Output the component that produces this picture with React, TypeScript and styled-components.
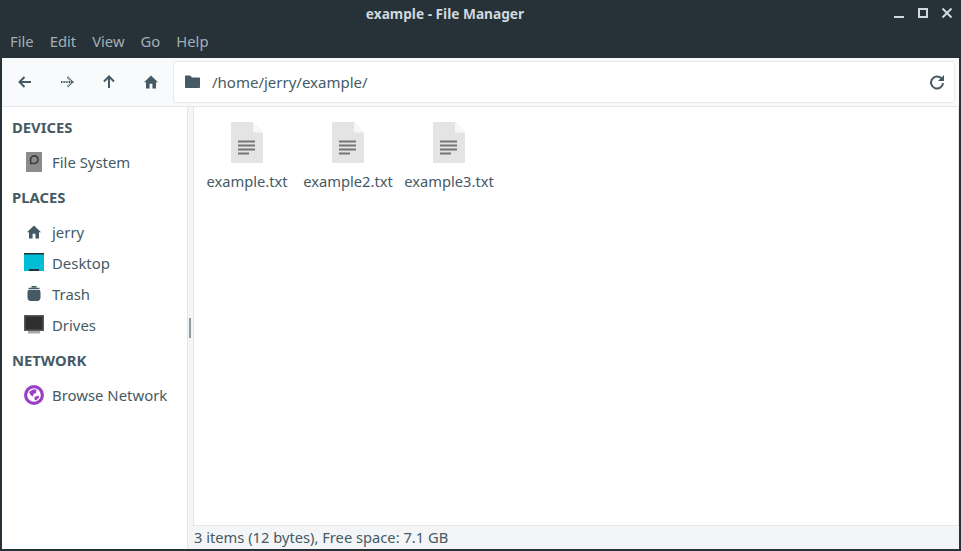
import React from "react";
import styled, { createGlobalStyle } from "styled-components";

const GlobalStyle = createGlobalStyle`
  html, body {
    margin: 0;
    padding: 0;
    background: #263238;
    overflow: hidden;
  }
`;

const Window = styled.div`
  width: 961px;
  height: 551px;
  display: flex;
  flex-direction: column;
  background: #263238;
  font-family: "Noto Sans", sans-serif;
  font-size: 15px;
  color: #455a64;
  overflow: hidden;
`;

const TitleBar = styled.div`
  height: 27px;
  flex: none;
  position: relative;
  display: flex;
  align-items: center;
  justify-content: center;
  padding-right: 71px;
  color: #cfd8dc;
  font-size: 13.7px;
  font-weight: 700;
`;

const WindowButtons = styled.div`
  position: absolute;
  top: 7px;
  right: 8px;
  display: flex;
  gap: 12px;
`;

const MenuBar = styled.div`
  height: 31px;
  flex: none;
  display: flex;
  align-items: center;
  gap: 16px;
  padding: 0 0 4px 10px;
  box-sizing: border-box;
  color: #a3afb5;
  font-size: 14.8px;
`;

const Toolbar = styled.div`
  height: 49px;
  flex: none;
  margin: 0 2px;
  display: flex;
  align-items: center;
  box-sizing: border-box;
  padding: 0 4px 0 0;
  background: #f9fafb;
  border-bottom: 1px solid #e3e7e9;
`;

const NavButtons = styled.div`
  width: 171px;
  flex: none;
  display: flex;
  align-items: center;
  padding-left: 2px;
  box-sizing: border-box;
`;

const NavButton = styled.div`
  width: 42px;
  height: 42px;
  display: flex;
  align-items: center;
  justify-content: center;
`;

const AddressBar = styled.div`
  flex: 1;
  height: 42px;
  display: flex;
  align-items: center;
  box-sizing: border-box;
  padding: 0 9px 0 11px;
  background: #fff;
  border: 1px solid #e6e9eb;
  border-radius: 3px;
  font-size: 15px;
`;

const AddressText = styled.span`
  flex: 1;
  margin-left: 12px;
`;

const Body = styled.div`
  flex: 1;
  min-height: 0;
  margin: 0 2px 2px;
  display: flex;
  background: #f4f5f7;
`;

const Sidebar = styled.div`
  width: 185px;
  flex: none;
  background: #fff;
  border-right: 1px solid #e3e7e9;
  padding-top: 8px;
  position: relative;
`;

const Grip = styled.div`
  position: absolute;
  top: 211px;
  right: -4px;
  width: 2px;
  height: 20px;
  background: #8f9ba1;
`;

const SectionTitle = styled.div<{ $gap: number }>`
  height: 25px;
  line-height: 25px;
  padding-left: 10px;
  margin-top: ${(p) => p.$gap}px;
  margin-bottom: 6px;
  font-weight: 700;
  font-size: 14.8px;
`;

const SideItem = styled.div`
  height: 31px;
  display: flex;
  align-items: center;
  padding-left: 21px;
  gap: 8px;
  font-size: 14.9px;
`;

const SideIcon = styled.div`
  width: 21px;
  height: 21px;
  display: flex;
  align-items: center;
  justify-content: center;
`;

const Main = styled.div`
  flex: 1;
  min-width: 0;
  margin-left: 5px;
  display: flex;
  flex-direction: column;
`;

const Files = styled.div`
  flex: 1;
  display: flex;
  align-items: flex-start;
  background: #fff;
  border: 1px solid #e3e7e9;
  border-top: none;
  padding: 15px 0 0 5px;
  gap: 5px;
`;

const FileItem = styled.div`
  width: 96px;
  display: flex;
  flex-direction: column;
  align-items: center;
  gap: 8px;
  white-space: nowrap;
  line-height: 21px;
  font-size: 14.7px;
`;

const StatusBar = styled.div`
  height: 23px;
  flex: none;
  line-height: 23px;
  font-size: 14.7px;
  padding-left: 1px;
`;

const BackIcon = () => (
  <svg width="14" height="14" viewBox="0 0 14 14">
    <path d="M1.500 7H13M6.500 2 1.500 7l5 5" fill="none" stroke="#455a64" strokeWidth="2" />
  </svg>
);

const ForwardIcon = () => (
  <svg width="14" height="14" viewBox="0 0 14 14">
    <path d="M1 7H12.500M7.500 2l5 5-5 5" fill="none" stroke="#455a64" strokeWidth="2" strokeDasharray="1 .6" />
  </svg>
);

const UpIcon = () => (
  <svg width="14" height="14" viewBox="0 0 14 14">
    <path d="M7 13V1.500M2 6.500l5-5 5 5" fill="none" stroke="#455a64" strokeWidth="2" />
  </svg>
);

const HomeIcon = () => (
  <svg width="14" height="14" viewBox="0 0 14 14">
    <path d="M7 .5 0 7.200h2V13.500h3.600V8.800h2.800v4.700H12V7.200h2L7 .5Z" fill="#455a64" />
  </svg>
);

const FolderIcon = () => (
  <svg width="15" height="14" viewBox="0 0 15 14">
    <path d="M0 1.500C0 .9.400.5 1 .5h4.200L7 2.400h7c.6 0 1 .4 1 1V12c0 .6-.4 1-1 1H1c-.6 0-1-.4-1-1V1.500Z" fill="#455a64" />
  </svg>
);

const ReloadIcon = () => (
  <svg width="16" height="16" viewBox="0 0 16 16">
    <path d="M13 5.200A6 6 0 1 0 14 9" fill="none" stroke="#455a64" strokeWidth="2" />
    <path d="M15 1v6H9l6-6Z" fill="#455a64" />
  </svg>
);

const DiskIcon = () => (
  <svg width="16" height="20" viewBox="0 0 16 20">
    <rect width="16" height="20" fill="#8c8c8c" />
    <path d="M4.800 11.500 4.500 8a3.800 3.800 0 1 1 3.700 3.500H4.800Z" fill="none" stroke="#3c3c3c" strokeWidth="1.600" />
  </svg>
);

const DesktopIcon = () => (
  <svg width="20" height="19" viewBox="0 0 20 19">
    <rect width="20" height="18" fill="#00bcd4" />
    <rect width="20" height="1.500" fill="#263238" />
    <rect x="5" y="16" width="10" height="2" fill="#263238" />
  </svg>
);

const TrashIcon = () => (
  <svg width="14" height="15" viewBox="0 0 14 15">
    <path d="M1 4h12l.5 2.500v5c0 1.800-1.200 3.500-3.200 3.500H3.700C1.700 15 .5 13.300.5 11.500v-5L1 4Z" fill="#455a64" />
    <path d="M1.500 2.500h11M4.500.7h5" stroke="#455a64" strokeWidth="1.400" />
  </svg>
);

const DrivesIcon = () => (
  <svg width="20" height="19" viewBox="0 0 20 19">
    <rect width="20" height="16" fill="#5a5a5a" />
    <rect x="1.500" y="1.500" width="17" height="13" fill="#2f2f2f" />
    <rect x="4" y="16" width="12" height="2.500" fill="#a8a8a8" />
  </svg>
);

const NetworkIcon = () => (
  <svg width="20" height="20" viewBox="0 0 20 20">
    <circle cx="10" cy="10" r="8.400" fill="#fff" stroke="#9c3fc8" strokeWidth="3.200" />
    <path d="M5 7 9 4.500h3.500L12 8l-2.500 1-.5 2.500-2-1L5 7ZM10.500 12l4-1.500.5 2-3 3-1.500-1V12Z" fill="#9c3fc8" />
  </svg>
);

const TextFileIcon = () => (
  <svg width="32" height="41" viewBox="0 0 32 41">
    <path d="M1 0h21l10 10.500V40a1 1 0 0 1-1 1H1a1 1 0 0 1-1-1V1a1 1 0 0 1 1-1Z" fill="#e4e4e4" />
    <path d="M22 0l10 10.500H23a1 1 0 0 1-1-1V0Z" fill="#f7f7f7" />
    <path d="M7 19.500h17M7 23.500h17M7 27.500h17M7 31.500h11" stroke="#757575" strokeWidth="1.800" />
  </svg>
);

const files = ["example.txt", "example2.txt", "example3.txt"];

export default function App() {
  return (
    <Window>
      <GlobalStyle />
      <TitleBar>
        example - File Manager
        <WindowButtons>
          <svg width="12" height="12" viewBox="0 0 12 12">
            <path d="M1 10h10" stroke="#cfd8dc" strokeWidth="2" />
          </svg>
          <svg width="12" height="12" viewBox="0 0 12 12">
            <rect x="2" y="2" width="8" height="8" fill="none" stroke="#cfd8dc" strokeWidth="2" />
          </svg>
          <svg width="12" height="12" viewBox="0 0 12 12">
            <path d="M1.500 1.500l9 9M10.500 1.500l-9 9" stroke="#cfd8dc" strokeWidth="2" />
          </svg>
        </WindowButtons>
      </TitleBar>
      <MenuBar>
        <span>File</span>
        <span>Edit</span>
        <span>View</span>
        <span>Go</span>
        <span>Help</span>
      </MenuBar>
      <Toolbar>
        <NavButtons>
          <NavButton><BackIcon /></NavButton>
          <NavButton><ForwardIcon /></NavButton>
          <NavButton><UpIcon /></NavButton>
          <NavButton><HomeIcon /></NavButton>
        </NavButtons>
        <AddressBar>
          <FolderIcon />
          <AddressText>/home/jerry/example/</AddressText>
          <ReloadIcon />
        </AddressBar>
      </Toolbar>
      <Body>
        <Sidebar>
          <SectionTitle $gap={0}>DEVICES</SectionTitle>
          <SideItem><SideIcon><DiskIcon /></SideIcon>File System</SideItem>
          <SectionTitle $gap={8}>PLACES</SectionTitle>
          <SideItem><SideIcon><HomeIcon /></SideIcon>jerry</SideItem>
          <SideItem><SideIcon><DesktopIcon /></SideIcon>Desktop</SideItem>
          <SideItem><SideIcon><TrashIcon /></SideIcon>Trash</SideItem>
          <SideItem><SideIcon><DrivesIcon /></SideIcon>Drives</SideItem>
          <SectionTitle $gap={8}>NETWORK</SectionTitle>
          <SideItem><SideIcon><NetworkIcon /></SideIcon>Browse Network</SideItem>
          <Grip />
        </Sidebar>
        <Main>
          <Files>
            {files.map((name) => (
              <FileItem key={name}>
                <TextFileIcon />
                {name}
              </FileItem>
            ))}
          </Files>
          <StatusBar>3 items (12 bytes), Free space: 7.1 GB</StatusBar>
        </Main>
      </Body>
    </Window>
  );
}
